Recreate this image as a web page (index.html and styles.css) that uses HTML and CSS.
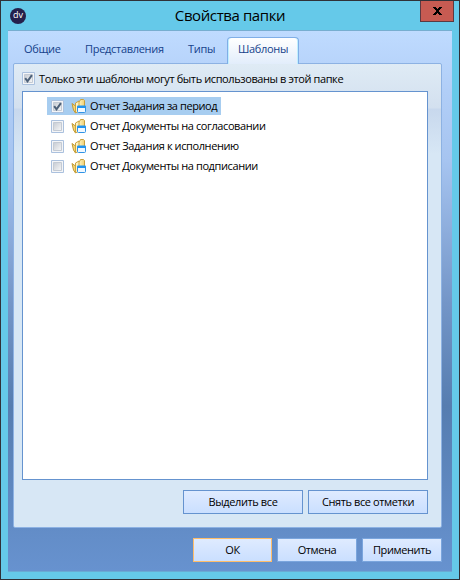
FILE: index.html
```html
<!DOCTYPE html>
<html lang="ru">
<head>
<meta charset="utf-8">
<title>Свойства папки</title>
<link rel="stylesheet" href="styles.css">
</head>
<body>
<svg class="defs" width="0" height="0">
  <linearGradient id="gold" x1="0" x2="1"><stop offset="0" stop-color="#fff6c8"/><stop offset="1" stop-color="#efcf72"/></linearGradient>
  <linearGradient id="shade" x1="0" y1="0" x2="1" y2="1"><stop offset="0" stop-color="#c6cbd3"/><stop offset="1" stop-color="#f7f7f7"/></linearGradient>
  <symbol id="folder" viewBox="0 0 16 16">
    <path d="M1 5.500L4.500 8v7L2.500 12z" fill="#f3d778" stroke="#c29a35"/>
    <path d="M7.500 3.500h1l1-2h3l1 1v10h-6z" fill="url(#gold)" stroke="#c9a03c"/>
    <path d="M4.500 5l3.500-2v10l-3.500 2z" fill="#fff3bd" stroke="#cba33f"/>
    <rect x="6.500" y="8.500" width="8" height="6" rx="1" fill="#f0f8ff" stroke="#2f93e6"/>
    <path d="M6 8.500a1 1 0 0 1 1-1h7a1 1 0 0 1 1 1V10H6z" fill="#2093f0"/>
  </symbol>
  <symbol id="box" viewBox="0 0 13 13"><path d="M.5.5h12v12H.5z" fill="#f4f5f7" stroke="#abc1de"/><path d="M2.500 2.500h8v8h-8z" fill="url(#shade)" stroke="#c3cad4"/></symbol>
  <symbol id="check" viewBox="0 0 13 13"><path d="M3.200 6.200L5.500 9.300L9.900 3.200" fill="none" stroke="#4c6078" stroke-width="2"/></symbol>
</svg>
<div class="window">
  <header class="titlebar">
    <div class="logo">dv</div>
    <h1 class="title">Свойства папки</h1>
    <button class="close" aria-label="Закрыть"><svg width="9" height="8" viewBox="0 0 9 8"><path d="M0 0h3v1h1v1h1V1h1V0h3v1H8v1H7v1H6v2h1v1h1v1h1v1H6V7H5V6H4v1H3v1H0V7h1V6h1V5h1V3H2V2H1V1H0z"/></svg></button>
  </header>
  <main class="client">
    <nav class="tabs">
      <div class="tab t1">Общие</div>
      <div class="tab t2">Представления</div>
      <div class="tab t3">Типы</div>
      <div class="tab active">Шаблоны</div>
    </nav>
    <section class="panel">
      <label class="only"><svg class="box"><use href="#box"/><use href="#check"/></svg><span>Только эти шаблоны могут быть использованы в этой папке</span></label>
      <div class="list">
        <div class="row selected"><svg class="box"><use href="#box"/><use href="#check"/></svg><svg class="folder"><use href="#folder"/></svg><span>Отчет Задания за период</span></div>
        <div class="row"><svg class="box"><use href="#box"/></svg><svg class="folder"><use href="#folder"/></svg><span>Отчет Документы на согласовании</span></div>
        <div class="row"><svg class="box"><use href="#box"/></svg><svg class="folder"><use href="#folder"/></svg><span>Отчет Задания к исполнению</span></div>
        <div class="row"><svg class="box"><use href="#box"/></svg><svg class="folder"><use href="#folder"/></svg><span>Отчет Документы на подписании</span></div>
      </div>
      <div class="actions"><button class="btn">Выделить все</button><button class="btn">Снять все отметки</button></div>
    </section>
    <footer class="footer"><button class="btn primary">ОК</button><button class="btn">Отмена</button><button class="btn">Применить</button></footer>
  </main>
</div>
</body>
</html>
```
FILE: styles.css
```css
* { box-sizing: border-box; }
body { margin: 0; font: 11px/16px "Open Sans", "Noto Sans", sans-serif; letter-spacing: -.4px; color: #000; white-space: nowrap; }
.defs { position: absolute; }
.window { width: 460px; height: 580px; border: 1px solid #303138; background: #65c9e9; padding: 0 7px 7px; display: flex; flex-direction: column; }
.titlebar { height: 29px; display: grid; grid-template-columns: 60px 1fr 60px; align-items: center; }
.logo { width: 16px; height: 16px; margin-left: 2px; border-radius: 50%; background: #25204b; color: #fff; font-size: 9px; line-height: 14px; text-align: center; letter-spacing: 0; }
.title { margin: 0; font-size: 15px; line-height: 29px; font-weight: 400; text-align: center; }
.close { align-self: start; justify-self: end; margin: 0 -2px 0 0; padding: 0; width: 34px; height: 21px; border: 1px solid #5b3a42; border-top: 0; background: #c75b52; display: flex; align-items: center; justify-content: center; }
.client { height: 543px; border-top: 1px solid #77aed0; border-bottom: 1px solid #6aaad3; background: linear-gradient(#bfdbff 0, #b1cef7 60px, #a6c4f0 130px, #7496c8 270px, #567db0 375px, #6792cf 100%); padding: 0 10px 0 5px; }
.tabs { height: 32px; padding-top: 6px; display: flex; color: #15428b; letter-spacing: -.3px; }
.tab { height: 26px; padding-top: 4px; }
.t1 { width: 72px; padding-left: 11px; }
.t2 { width: 103px; }
.t3 { width: 40px; }
.tab.active { width: 72px; height: 27px; border: 1px solid #80aee7; border-bottom: 0; border-radius: 4px 4px 0 0; box-shadow: inset 1px 0 #bfefff, inset -1px 0 #bfefff; background: linear-gradient(#fff, #e2edfb); text-align: center; padding-top: 3px; margin-left: -1px; }
.panel { height: 465px; border: 1px solid #8db2e3; border-radius: 2px; background: linear-gradient(#dfebf5 0, #d3e0ef 44px, #c8d8ed 45px, #d7e7f5 90px); padding: 7px 13px 0 8px; }
.only { display: flex; height: 20px; gap: 4px; }
.box { width: 13px; height: 13px; flex: none; }
.only .box { margin-top: 1px; }
.list { height: 389px; border: 1px solid #6593cf; background: #fff; padding: 5px 0 0 24px; display: flex; flex-direction: column; align-items: flex-start; gap: 2px; }
.row { height: 18px; display: flex; align-items: center; padding: 0 4px; }
.selected { background: #a7cdf0; }
.folder { width: 16px; height: 16px; margin: 0 3px 0 7px; }
.actions { display: flex; justify-content: flex-end; gap: 5px; padding-top: 10px; }
.btn { margin: 0; padding: 0; width: 120px; height: 24px; font: inherit; letter-spacing: inherit; color: #000; border: 1px solid #6593cf; background: linear-gradient(#dfebff, #cadfff); }
.footer { display: flex; justify-content: flex-end; gap: 5px; padding: 10px 0 0; }
.footer .btn { width: 80px; border-color: #7aa5dd; }
.footer .primary { width: 79px; border-color: #ffbd69; }
```
